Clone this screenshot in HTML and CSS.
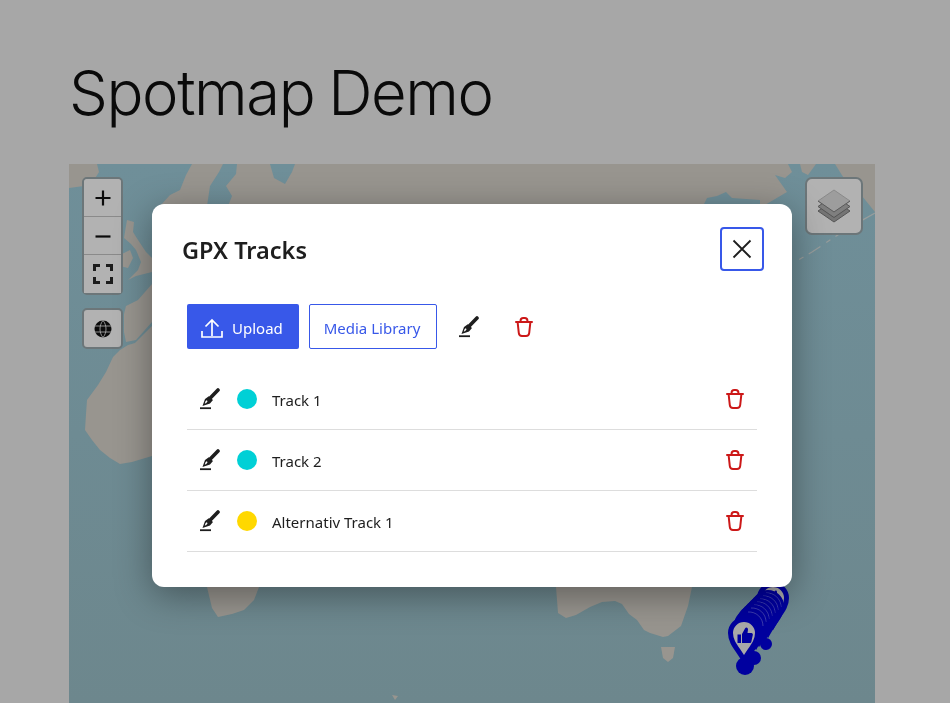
FILE: index.html
```html
<!DOCTYPE html>
<html lang="en">
<head>
    <meta charset="UTF-8">
    <title>Spotmap Demo</title>
    <link rel="stylesheet" href="styles.css">
</head>
<body>
    <svg class="icon-defs" width="0" height="0">
        <defs>
            <symbol id="pen" viewBox="0 0 20 22">
                <path d="M18 2 10.500 9.800" fill="none" stroke="currentColor" stroke-width="3.600" stroke-linecap="round"/>
                <path fill-rule="evenodd" d="M2.500 18 5 11 8.800 8.300 13 12 10 15.600ZM4.800 15.800 6.800 14.600 7.600 13 6.400 12.300 5.400 13.600Z" fill="currentColor"/>
                <path d="M0 20.200H11" fill="none" stroke="currentColor" stroke-width="1.800"/>
            </symbol>
            <symbol id="trash" viewBox="0 0 18 20">
                <path d="M1 5H17M5.600 5V3.600C5.600 2 6.800 1 8.200 1H9.800C11.200 1 12.400 2 12.400 3.600V5M2.600 5 3.800 16C4 18 5.200 19 7 19H11C12.800 19 14 18 14.200 16L15.400 5" fill="none" stroke="currentColor" stroke-width="2" stroke-linecap="round" stroke-linejoin="round"/>
            </symbol>
            <g id="pin-back">
                <path d="M0 24C-6 13-13.500 7-13.500-3A13.500 13.500 0 0 1 13.500-3C13.500 7 6 13 0 24Z" fill="#00009f" stroke="#00009f" stroke-width="5"/>
                <path d="M-2-16A14 14 0 0 1 13-2" fill="none" stroke="#8d8dc4" stroke-width=".6" stroke-opacity=".7"/>
            </g>
            <g id="pin-front">
                <path d="M0 24C-6 13-13.500 7-13.500-3A13.500 13.500 0 0 1 13.500-3C13.500 7 6 13 0 24Z" fill="#a9a9a9" stroke="#00009f" stroke-width="5"/>
            </g>
            <linearGradient id="sea" x1="0" y1="0" x2="0" y2="1">
                <stop offset="0" stop-color="#6f8f99"/>
                <stop offset="1" stop-color="#6d878d"/>
            </linearGradient>
        </defs>
    </svg>

    <main class="page">
        <h1 class="page-title">Spotmap Demo</h1>

        <div class="map">
            <svg class="map-tiles" viewBox="69 164 806 539" width="806" height="539">
                <rect x="69" y="164" width="806" height="539" fill="url(#sea)"/>
                <g class="land">
                    <path d="M69 164H97L99 172 94 180 84 186 69 188Z"/>
                    <path d="M192 164H223L219 172 210 186 207 206H160L170 195 180 190 186 175Z"/>
                    <path d="M237 164H270L274 178 285 184 292 172 295 164H788L792 172 785 178 775 175 787 192 770 202 763 206H228L232 196 226 186 236 174Z"/>
                    <path d="M800 164H816L808 175 802 172Z"/>
                    <path d="M835 164H875V212L862 196 845 180Z"/>
                    <path d="M127 220 134 222 133 232 138 240 146 252 152 258V272L136 276 128 280 138 270 141 262 136 250 131 244 124 238Z"/>
                    <path d="M122 254 130 250 133 258 128 268 120 266Z"/>
                    <path d="M152 284 145 292 138 300 126 306 124 314 124 332 126 342 136 340 152 322Z"/>
                    <path d="M152 326 135 343 128 345 120 350 113 357 106 372 98 385 87 400 86 414 85 430 92 440 100 450 110 458 120 464 132 462 152 456Z"/>
                    <path d="M207 587H259L254 600 244 610 232 614 218 617 212 608Z"/>
                    <path d="M556 587H692L688 606 681 626 668 636 663 637 650 633 644 630 637 620 629 614 622 604 615 601 602 602 590 607 576 615 566 618 558 613Z"/>
                    <path d="M661 647 675 647 673 658 668 662 663 658Z"/>
                    <path d="M392 695 398 696 395 700Z"/>
                </g>
                <path class="bay" d="M726 192 717 196 707 198 703 206H760V200L732 198Z"/>
                <path class="chain" d="M875 213 852 226 830 240 812 252 795 262"/>
                <g class="markers">
                    <circle cx="745" cy="666" r="9"/>
                    <circle cx="754" cy="658" r="7"/>
                    <circle cx="766" cy="644" r="6"/>
                    <use href="#pin-front" x="773" y="601"/>
                    <path class="thumb" d="M772 601V595L775 591C776 590 777 591 777 592V601Z"/>
                    <use href="#pin-back" x="768" y="609"/>
                    <use href="#pin-back" x="765" y="612"/>
                    <use href="#pin-back" x="762" y="615"/>
                    <use href="#pin-back" x="759" y="618"/>
                    <use href="#pin-back" x="756" y="621"/>
                    <use href="#pin-back" x="753" y="624"/>
                    <use href="#pin-back" x="750" y="628"/>
                    <use href="#pin-front" x="744" y="636"/>
                    <path class="thumb" d="M737.500 634.500H741V643H737.500ZM742 643V634L745 628.500C746 626.500 748 627.500 748 629.500L747.500 633H751.500C752.500 633 753 634 752.800 635L751.300 642C751.100 642.700 750.500 643 749.800 643Z"/>
                </g>
            </svg>

            <div class="zoom-control">
                <button class="map-button">
                    <svg width="18" height="18" viewBox="0 0 18 18"><path d="M9 1.500V16.500M1.500 9H16.500" stroke="#0b0b0b" stroke-width="2.200" fill="none"/></svg>
                </button>
                <button class="map-button">
                    <svg width="18" height="18" viewBox="0 0 18 18"><path d="M1.500 9.500H16.500" stroke="#0b0b0b" stroke-width="2.200" fill="none"/></svg>
                </button>
                <button class="map-button">
                    <svg width="20" height="20" viewBox="0 0 20 20"><path d="M1.500 7V1.500H7M13 1.500H18.500V7M18.500 13V18.500H13M7 18.500H1.500V13" stroke="#1c1c1c" stroke-width="3" fill="none"/></svg>
                </button>
            </div>

            <button class="map-button locate-control">
                <svg width="18" height="18" viewBox="0 0 18 18"><circle cx="9" cy="9" r="8.500" fill="#0b0b0b"/><path d="M0 6H18M0 12H18M9 .5C5 5 5 13 9 17.500M9 .5C13 5 13 13 9 17.500" stroke="#b2b2b2" stroke-width=".8" fill="none"/></svg>
            </button>

            <button class="layers-control">
                <svg width="34" height="34" viewBox="0 0 34 34">
                    <path d="M1 22 17 33 33 22 17 11Z" fill="#757575" stroke="#555"/>
                    <path d="M1 17.500 17 28.500 33 17.500 17 6.500Z" fill="#7f7f7f" stroke="#555"/>
                    <path d="M1 12 17 23 33 12 17 1Z" fill="#9d9d9d" stroke="#8a8a8a"/>
                    <path d="M1 12 17 23 33 12" fill="none" stroke="#5a5a5a"/>
                </svg>
            </button>
        </div>
    </main>

    <div class="modal">
        <header class="modal-head">
            <h2 class="modal-title">GPX Tracks</h2>
            <button class="close-button">
                <svg width="20" height="20" viewBox="0 0 20 20"><path d="M1.500 1.500 18.500 18.500M18.500 1.500 1.500 18.500" stroke="#1e1e1e" stroke-width="1.800" fill="none"/></svg>
            </button>
        </header>

        <div class="toolbar">
            <button class="btn btn-primary">
                <svg width="22" height="20" viewBox="0 0 22 20"><path d="M11 18V2M4.500 8.500 11 2 17.500 8.500M1 13V19H21V13" stroke="#fff" stroke-width="1.700" fill="none"/></svg>
                Upload
            </button>
            <button class="btn btn-outline">Media Library</button>
            <svg class="pen-icon toolbar-pen"><use href="#pen"/></svg>
            <svg class="trash-icon toolbar-trash"><use href="#trash"/></svg>
        </div>

        <ul class="track-list">
            <li class="track">
                <svg class="pen-icon"><use href="#pen"/></svg>
                <span class="track-dot dot-cyan"></span>
                <span class="track-name">Track 1</span>
                <svg class="trash-icon"><use href="#trash"/></svg>
            </li>
            <li class="track">
                <svg class="pen-icon"><use href="#pen"/></svg>
                <span class="track-dot dot-cyan"></span>
                <span class="track-name">Track 2</span>
                <svg class="trash-icon"><use href="#trash"/></svg>
            </li>
            <li class="track">
                <svg class="pen-icon"><use href="#pen"/></svg>
                <span class="track-dot dot-yellow"></span>
                <span class="track-name">Alternativ Track 1</span>
                <svg class="trash-icon"><use href="#trash"/></svg>
            </li>
        </ul>
    </div>
</body>
</html>
```

FILE: styles.css
```css
* {
    box-sizing: border-box;
}
html, body {
    height: 100%;
}
body {
    margin: 0;
    background: #a7a7a7;
    overflow: hidden;
    font-family: "Noto Sans", sans-serif;
    color: #1e1e1e;
}
button {
    font-family: inherit;
    cursor: pointer;
}
.icon-defs {
    position: absolute;
}
.page {
    padding: 0 75px 0 69px;
}
.page-title {
    margin: 0;
    padding: 52px 0 31px;
    font-family: Inter, sans-serif;
    font-size: 61.5px;
    font-weight: 300;
    line-height: 81px;
    letter-spacing: -1.4px;
    word-spacing: -2px;
    color: #0a0a0a;
}

/* map */
.map {
    position: relative;
    height: 539px;
    overflow: hidden;
}
.map-tiles {
    display: block;
}
.land {
    fill: #98958f;
}
.bay {
    fill: #6f8f99;
}
.chain {
    fill: none;
    stroke: #989d9c;
    stroke-width: 1.2;
    stroke-dasharray: 14 6 5 7;
}
.markers circle {
    fill: #00009f;
}
.thumb {
    fill: #00009f;
}
.zoom-control {
    position: absolute;
    left: 13px;
    top: 13px;
    width: 41px;
    display: flex;
    flex-direction: column;
    background: #b2b2b2;
    border: 2px solid #6c7679;
    border-radius: 5px;
}
.map-button {
    width: 37px;
    height: 38px;
    padding: 0;
    display: flex;
    align-items: center;
    justify-content: center;
    background: #b2b2b2;
    border: 0;
    border-bottom: 1px solid #8a8a8a;
    border-radius: 4px 4px 0 0;
}
.zoom-control .map-button:last-child {
    border-bottom: 0;
    border-radius: 0 0 4px 4px;
}
.zoom-control .map-button + .map-button {
    border-radius: 0;
}
.locate-control {
    position: absolute;
    left: 13px;
    top: 144px;
    width: 41px;
    height: 41px;
    border: 2px solid #6c7679;
    border-radius: 5px;
}
.layers-control {
    position: absolute;
    left: 736px;
    top: 13px;
    width: 58px;
    height: 58px;
    padding: 0;
    display: flex;
    align-items: center;
    justify-content: center;
    background: #b2b2b2;
    border: 2px solid #6c7679;
    border-radius: 7px;
}

/* modal */
.modal {
    position: fixed;
    left: 152px;
    top: 204px;
    width: 640px;
    height: 383px;
    padding: 23px 28px 0 30px;
    background: #fff;
    border-radius: 12px;
    box-shadow: 0 8px 36px rgba(0, 0, 0, 0.38);
}
.modal-head {
    height: 44px;
    display: flex;
    align-items: center;
    justify-content: space-between;
}
.modal-title {
    margin: 0;
    padding-top: 2px;
    font-size: 23.5px;
    font-weight: 600;
    line-height: 42px;
}
.close-button {
    width: 44px;
    height: 44px;
    padding: 0;
    display: flex;
    align-items: center;
    justify-content: center;
    background: #fff;
    border: 2px solid #3858e9;
    border-radius: 4px;
}
.toolbar {
    display: flex;
    align-items: center;
    margin-top: 33px;
    padding-left: 5px;
}
.btn {
    height: 45px;
    display: flex;
    align-items: center;
    font-size: 15px;
    border-radius: 2px;
}
.btn-primary {
    width: 112px;
    padding: 2px 0 0 14px;
    gap: 9px;
    background: #3858e9;
    border: 0;
    color: #fff;
}
.btn-outline {
    width: 128px;
    margin-left: 10px;
    justify-content: center;
    padding: 2px 2px 0 0;
    background: #fff;
    border: 1px solid #3858e9;
    color: #3858e9;
}
.pen-icon {
    width: 20px;
    height: 22px;
    color: #1e1e1e;
    flex: none;
}
.trash-icon {
    width: 18px;
    height: 20px;
    color: #cc1818;
    flex: none;
}
.toolbar-pen {
    margin-left: 22px;
}
.toolbar-trash {
    margin-left: 36px;
}
.track-list {
    list-style: none;
    margin: 20px 7px 0 5px;
    padding: 0;
}
.track {
    height: 61px;
    display: flex;
    align-items: center;
    padding: 0 13px;
    border-bottom: 1px solid #ddd;
    font-size: 15px;
}
.track-dot {
    width: 20px;
    height: 20px;
    margin-left: 17px;
    border-radius: 50%;
    flex: none;
}
.dot-cyan {
    background: #00d0d6;
}
.dot-yellow {
    background: #ffd800;
}
.track-name {
    margin-left: 15px;
    padding-top: 2px;
    flex: 1;
}
```
